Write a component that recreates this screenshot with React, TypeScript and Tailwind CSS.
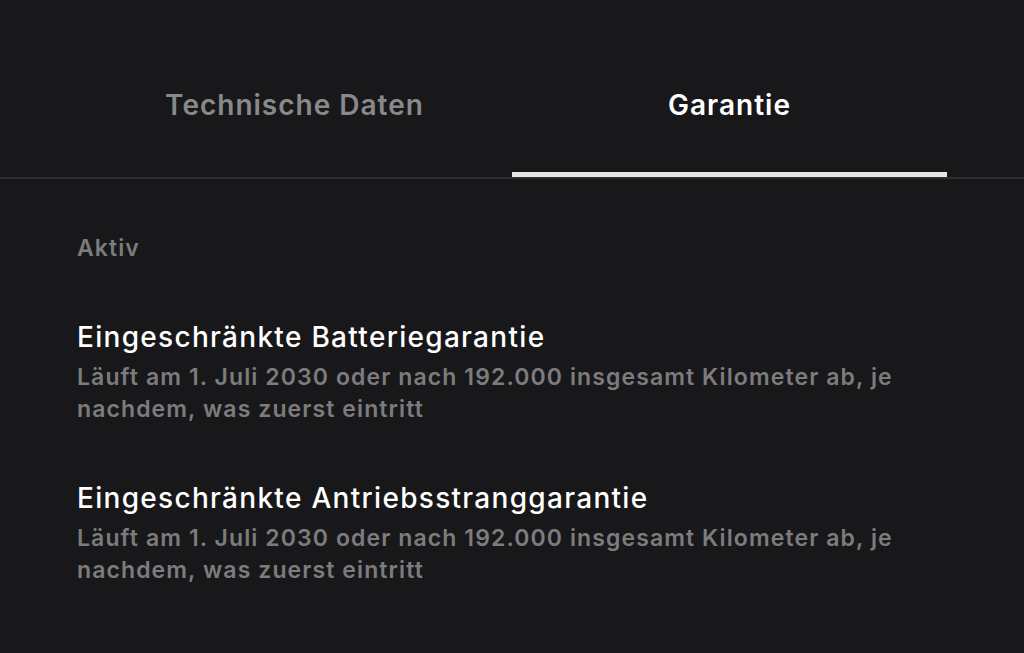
import { useState } from 'react';

const tabs = ['Technische Daten', 'Garantie'];

const warranties = [
    {
        title: 'Eingeschränkte Batteriegarantie',
        text: 'Läuft am 1. Juli 2030 oder nach 192.000 insgesamt Kilometer ab, je nachdem, was zuerst eintritt',
    },
    {
        title: 'Eingeschränkte Antriebsstranggarantie',
        text: 'Läuft am 1. Juli 2030 oder nach 192.000 insgesamt Kilometer ab, je nachdem, was zuerst eintritt',
    },
];

const App = () => {
    const [active, setActive] = useState(1);

    return (
        <div className="min-h-screen w-full bg-[#18181a] font-['Inter',sans-serif] antialiased">
            {/* Tabs */}
            <div className="border-b-2 border-[#2e2e30] px-[77px]">
                <div className="flex">
                    {tabs.map((tab, i) => (
                        <button
                            key={tab}
                            onClick={() => setActive(i)}
                            className={`flex-1 h-[177px] pt-[38px] flex items-center justify-center text-[28px] tracking-[1px] font-semibold border-b-[5px] ${
                                active === i ? 'text-white border-[#e6e6e6]' : 'text-[#89898b] border-transparent'
                            }`}
                        >
                            {tab}
                        </button>
                    ))}
                </div>
            </div>

            {/* Content */}
            <div className="px-[77px] pt-[54px]">
                <div className="text-[23px] tracking-[1.1px] font-semibold text-[#7c7c7e] leading-[30px]">Aktiv</div>
                <div className="mt-[56px] flex flex-col gap-[55px]">
                    {warranties.map((w) => (
                        <div key={w.title} className="max-w-[860px]">
                            <div className="text-[28px] tracking-[1.3px] font-medium text-white leading-[36px]">{w.title}</div>
                            <div className="text-[23px] tracking-[1.1px] font-semibold text-[#7c7c7e] leading-[32px] mt-[6px]">{w.text}</div>
                        </div>
                    ))}
                </div>
            </div>
        </div>
    );
};

export default App;
